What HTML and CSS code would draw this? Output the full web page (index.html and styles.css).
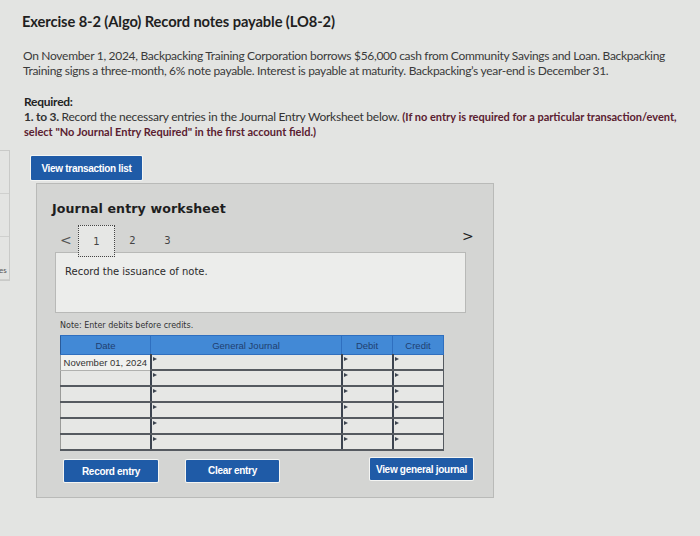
FILE: index.html
```html
<!DOCTYPE html>
<html>
<head>
<meta charset="utf-8">
<link rel="stylesheet" href="styles.css">
</head>
<body>
<div class="side">
  <div class="side-cell"></div>
  <div class="side-cell"></div>
  <div class="side-cell"><span class="side-s">es</span></div>
</div>
<main class="page">
  <h1 class="title">Exercise 8-2 (Algo) Record notes payable (LO8-2)</h1>
  <p class="intro">On November 1, 2024, Backpacking Training Corporation borrows $56,000 cash from Community Savings and Loan. Backpacking Training signs a three-month, 6% note payable. Interest is payable at maturity. Backpacking’s year-end is December 31.</p>
  <div class="req">
    <div class="req-h">Required:</div>
    <div class="req-line"><b>1. to 3.</b> Record the necessary entries in the Journal Entry Worksheet below. <span class="warn">(If no entry is required for a particular transaction/event,</span></div>
    <div class="warn">select "No Journal Entry Required" in the first account field.)</div>
  </div>
  <button class="btn btn-list">View transaction list</button>
  <section class="ws">
    <h2 class="ws-title">Journal entry worksheet</h2>
    <div class="tabs">
      <span class="arrow">&lt;</span>
      <span class="tab tab-on">1</span>
      <span class="tab">2</span>
      <span class="tab">3</span>
      <span class="arrow arrow-r">&gt;</span>
    </div>
    <div class="desc">Record the issuance of note.</div>
    <div class="note">Note: Enter debits before credits.</div>
    <table class="jt">
      <thead>
        <tr><th class="c-date">Date</th><th class="c-gj">General Journal</th><th class="c-num">Debit</th><th class="c-num">Credit</th></tr>
      </thead>
      <tbody>
        <tr><td class="date">November 01, 2024</td><td class="in"></td><td class="in"></td><td class="in"></td></tr>
        <tr><td></td><td class="in"></td><td class="in"></td><td class="in"></td></tr>
        <tr><td></td><td class="in"></td><td class="in"></td><td class="in"></td></tr>
        <tr><td></td><td class="in"></td><td class="in"></td><td class="in"></td></tr>
        <tr><td></td><td class="in"></td><td class="in"></td><td class="in"></td></tr>
        <tr><td></td><td class="in"></td><td class="in"></td><td class="in"></td></tr>
      </tbody>
    </table>
    <div class="actions">
      <button class="btn btn-rec">Record entry</button>
      <button class="btn btn-clr">Clear entry</button>
      <button class="btn btn-view">View general journal</button>
    </div>
  </section>
</main>
</body>
</html>
```
FILE: styles.css
```css
html, body {
  margin: 0;
  padding: 0;
}
body {
  background: #e3e4e2;
  width: 700px;
  height: 536px;
  overflow: hidden;
  position: relative;
  font-family: "Lato", "Liberation Sans", sans-serif;
  color: #2a2a2a;
}
.side {
  position: absolute;
  left: -4px;
  top: 150px;
  width: 12px;
  border: 1px solid #c9cac8;
  display: flex;
  flex-direction: column;
}
.side-cell {
  height: 42px;
  border-bottom: 1px solid #cfd0ce;
  position: relative;
}
.side-s {
  position: absolute;
  left: 2px;
  top: 28px;
  font-size: 8px;
  color: #555;
}
.page {
  padding: 12px 0 0 22px;
}
.title {
  margin: 0;
  font-size: 14.7px;
  font-weight: 700;
  color: #1f1f1f;
  letter-spacing: -0.1px;
}
.intro {
  margin: 18px 28px 0 1px;
  font-size: 12px;
  line-height: 15px;
  color: #3a3a3a;
  letter-spacing: -0.3px;
}
.req {
  margin: 16px 0 0 2px;
  font-size: 12px;
  line-height: 15px;
  color: #333;
  letter-spacing: -0.25px;
}
.req-line {
  white-space: nowrap;
}
.req-h {
  font-weight: 700;
  color: #222;
}
.warn {
  font-weight: 700;
  color: #5a2030;
  font-size: 11px;
  letter-spacing: 0;
}
.btn {
  flex: none;
  background: #1f5ba7;
  color: #fff;
  border: none;
  border-radius: 1px;
  font-family: "Liberation Sans", sans-serif;
  font-weight: 700;
  font-size: 10px;
  letter-spacing: -0.3px;
  padding: 0;
  height: 23px;
  box-shadow: 0 0 0 1px #f4f5f3;
}
.btn-list {
  margin: 17px 0 0 9px;
  width: 111px;
  height: 24px;
  display: block;
}
.ws {
  margin: 3px 0 0 14px;
  width: 458px;
  height: 315px;
  box-sizing: border-box;
  background: #d4d5d3;
  border: 1px solid #b9bab8;
  padding: 17px 27px 0 18px;
}
.ws-title {
  margin: 0 0 0 -3px;
  font-family: "DejaVu Sans", sans-serif;
  font-size: 12.6px;
  font-weight: 700;
  color: #1e1e1e;
  letter-spacing: 0.1px;
}
.tabs {
  display: flex;
  align-items: center;
  height: 32px;
  margin-top: 8px;
  font-family: "DejaVu Sans", sans-serif;
  font-size: 10px;
  color: #444;
}
.arrow {
  font-size: 14px;
  color: #555;
  width: 18px;
  padding-left: 5px;
}
.arrow-r {
  margin-left: auto;
  margin-right: -14px;
  margin-top: -8px;
  color: #222;
}
.tab {
  width: 35px;
  height: 30px;
  display: flex;
  align-items: center;
  justify-content: center;
}
.tab-on {
  border: 1px dotted #444;
  background: #e6e7e5;
  height: 30px;
  margin-top: 2px;
}
.desc {
  margin-top: -4px;
  height: 61px;
  box-sizing: border-box;
  background: #ecedeb;
  border: 1px solid #b8b9b7;
  padding: 13px 0 0 9px;
  font-family: "DejaVu Sans", sans-serif;
  font-size: 10px;
  color: #2a2a2a;
}
.note {
  margin: 8px 0 0 5px;
  font-family: "DejaVu Sans", sans-serif;
  font-size: 8px;
  color: #333;
}
.jt {
  margin: 5px 0 0 5px;
  border-collapse: collapse;
  width: 384px;
  font-family: "Liberation Sans", sans-serif;
  font-size: 9.5px;
}
.jt th {
  background: #4289d6;
  color: #1f3f70;
  font-weight: 400;
  height: 18px;
  padding: 0;
  border: 1px solid #2f6fbf;
  border-left: 1px solid #2a5b9a;
}
.c-date { width: 89px; }
.c-gj { width: 190px; }
.c-num { width: 50px; }
.jt td {
  height: 14px;
  padding: 0;
  background: #e6e7e5;
  border-bottom: 2px solid #555a60;
  border-left: 1px solid #c8c9c7;
}
.jt td.date {
  background: #f0f1ef;
  border: 1px solid #b0b1af;
  color: #333;
  text-align: center;
  font-size: 9.5px;
}
.jt td.in {
  border-left: 2px solid #3c4450;
  border-right: 1px solid #555a60;
  position: relative;
}
.jt td.in::before {
  content: "";
  position: absolute;
  left: 1px;
  top: 2px;
  border-left: 4px solid #3c4450;
  border-top: 2px solid transparent;
  border-bottom: 2px solid transparent;
}
.jt tbody tr td:first-child {
  border-left: 1px solid #9a9b99;
}
.actions {
  display: flex;
  align-items: center;
  margin: 9px 0 0 9px;
}
.btn-rec {
  width: 94px;
  height: 22px;
}
.btn-clr {
  width: 93px;
  height: 22px;
  margin-left: 28px;
  margin-top: -1px;
}
.btn-view {
  width: 103px;
  height: 22px;
  margin-left: 91px;
  margin-top: -4px;
}
```
